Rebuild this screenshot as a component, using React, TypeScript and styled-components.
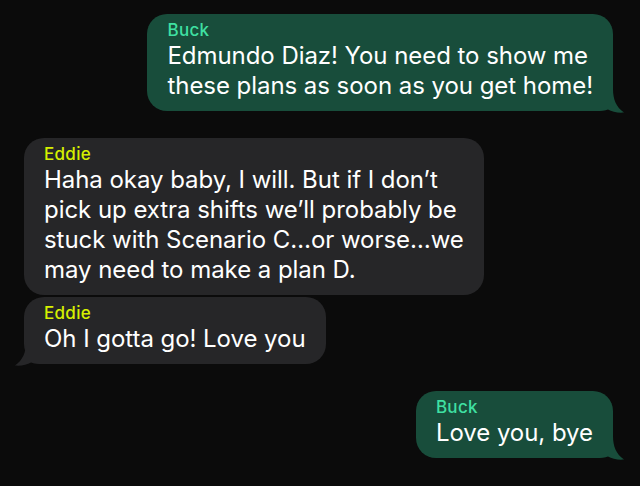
import React from "react";
import styled, { createGlobalStyle } from "styled-components";

const Global = createGlobalStyle`
  html, body { margin: 0; padding: 0; background: #0b0b0b; }
  body { font-family: Inter, "Noto Sans", sans-serif; -webkit-font-smoothing: antialiased; }
`;

const Thread = styled.div`
  width: 640px;
  height: 486px;
  box-sizing: border-box;
  padding: 14px 27px 0 24px;
  display: flex;
  flex-direction: column;
  background: #0b0b0b;
  overflow: hidden;
`;

const Row = styled.div<{ $mine: boolean; $gap: number }>`
  display: flex;
  justify-content: ${(p) => (p.$mine ? "flex-end" : "flex-start")};
  margin-top: ${(p) => p.$gap}px;
`;

const Bubble = styled.div<{ $mine: boolean }>`
  position: relative;
  background: ${(p) => (p.$mine ? "#184d3b" : "#262628")};
  border-radius: 20px;
  padding: 6px 20px 10px 20px;
  color: #ffffff;
`;

const Name = styled.div<{ $mine: boolean }>`
  font-size: 17px;
  line-height: 21px;
  font-weight: 500;
  color: ${(p) => (p.$mine ? "#3fe0a2" : "#d6f000")};
  letter-spacing: 0.3px;
`;

const Line = styled.div`
  font-size: 24px;
  line-height: 30px;
  white-space: nowrap;
  letter-spacing: -0.05px;
`;

const TailSvg = styled.svg<{ $mine: boolean }>`
  position: absolute;
  bottom: -2px;
  width: 32px;
  height: 24px;
  ${(p) => (p.$mine ? "right: -12px;" : "left: -10px; transform: scaleX(-1);")}
`;

function Tail({ mine, color }: { mine: boolean; color: string }) {
  return (
    <TailSvg $mine={mine} viewBox="0 0 32 24" aria-hidden>
      <path
        d="M20 0 C20 10 23 18 31 23.5 C25 24 19 23 15 20.5 C12 21.8 8 22 4 22 L0 22 L0 0 Z"
        fill={color}
      />
    </TailSvg>
  );
}

type Msg = { mine: boolean; name: string; lines: string[]; gap: number; tail: boolean };

const messages: Msg[] = [
  {
    mine: true,
    name: "Buck",
    lines: ["Edmundo Diaz! You need to show me", "these plans as soon as you get home!"],
    gap: 0,
    tail: true,
  },
  {
    mine: false,
    name: "Eddie",
    lines: [
      "Haha okay baby, I will. But if I don\u2019t",
      "pick up extra shifts we\u2019ll probably be",
      "stuck with Scenario C\u2026or worse\u2026we",
      "may need to make a plan D.",
    ],
    gap: 27,
    tail: false,
  },
  { mine: false, name: "Eddie", lines: ["Oh I gotta go! Love you"], gap: 2, tail: true },
  { mine: true, name: "Buck", lines: ["Love you, bye"], gap: 27, tail: true },
];

export default function App() {
  return (
    <>
      <Global />
      <Thread>
        {messages.map((m, i) => (
          <Row key={i} $mine={m.mine} $gap={m.gap}>
            <Bubble $mine={m.mine}>
              {m.tail && <Tail mine={m.mine} color={m.mine ? "#184d3b" : "#262628"} />}
              <Name $mine={m.mine}>{m.name}</Name>
              {m.lines.map((l, j) => (
                <Line key={j}>{l}</Line>
              ))}
            </Bubble>
          </Row>
        ))}
      </Thread>
    </>
  );
}
